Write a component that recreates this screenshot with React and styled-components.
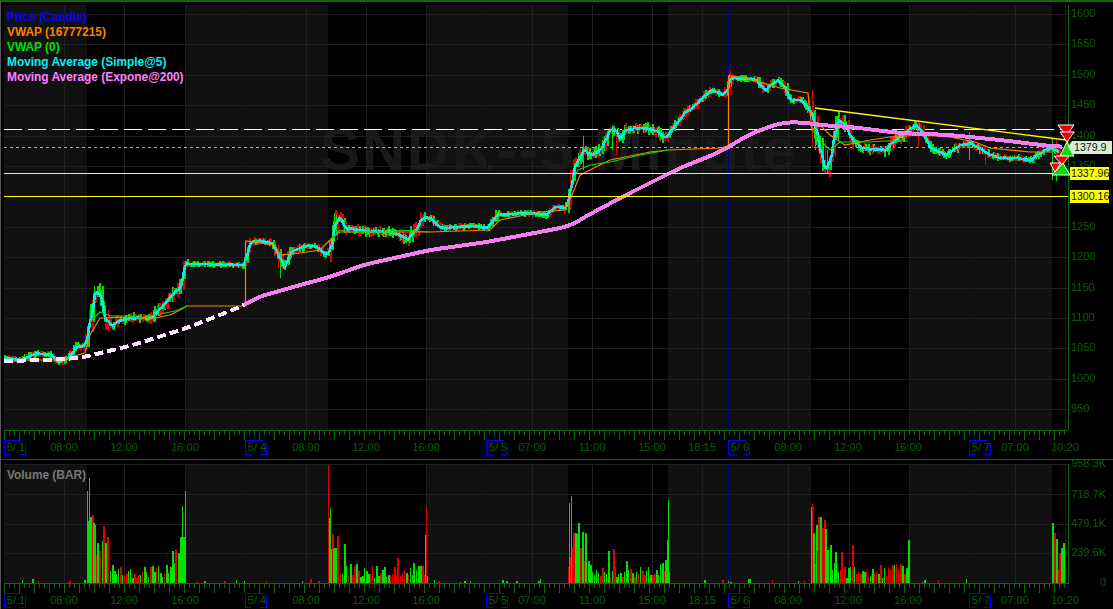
import React from 'react';
import styled, { createGlobalStyle } from 'styled-components';

// chart data is generated from traced keypoints, seeded so every load is the same
const seeded = seed => () => {
  seed = (seed + 0x6d2b79f5) | 0;
  let t = Math.imul(seed ^ (seed >>> 15), 1 | seed);
  t = (t + Math.imul(t ^ (t >>> 7), 61 | t)) ^ t;
  return ((t ^ (t >>> 14)) >>> 0) / 4294967296;
};

const PRICE_PATH = [
  [4, 358], [20, 360], [37, 353], [50, 355], [58, 362], [68, 358], [75, 348], [85, 345], [90, 320], [95, 292],
  [100, 295], [105, 320], [112, 326], [120, 320], [135, 318], [150, 319], [165, 303], [172, 295], [180, 287], [185, 264],
  [243, 265], [245, 260], [250, 243], [258, 241], [272, 243], [275, 250], [281, 260], [284, 268], [290, 252], [305, 246],
  [315, 246], [325, 255], [330, 250], [335, 222], [340, 219], [345, 228], [360, 230], [375, 232], [390, 232], [400, 235],
  [407, 240], [415, 230], [422, 218], [430, 218], [440, 228], [475, 226], [487, 228], [497, 215], [510, 214], [530, 213],
  [545, 215], [555, 207], [565, 208], [568, 200], [572, 178], [575, 165], [583, 150], [590, 155], [600, 150], [610, 130],
  [615, 130], [620, 140], [625, 130], [640, 128], [655, 130], [665, 138], [675, 125], [685, 112], [695, 105], [705, 95],
  [712, 90], [722, 95], [727, 90], [730, 78], [740, 78], [755, 80], [765, 90], [777, 80], [785, 88], [790, 100],
  [800, 100], [808, 108], [812, 115], [820, 150], [825, 170], [830, 160], [833, 140], [838, 120], [845, 125], [852, 140],
  [862, 148], [875, 150], [885, 150], [895, 140], [905, 133], [915, 125], [922, 132], [930, 148], [945, 155], [960, 145],
  [970, 143], [978, 148], [990, 155], [1000, 158], [1015, 158], [1030, 160], [1045, 150], [1052, 148], [1058, 153],
];

const EMA_KEYS = [
  [4, 361], [43, 360], [80, 358], [133, 345], [187, 328], [245, 305], [255, 298], [300, 285], [330, 277], [363, 265],
  [430, 250], [487, 242], [550, 230], [570, 226], [590, 214], [630, 193], [680, 168], [720, 152], [750, 134], [780, 123],
  [800, 122], [820, 125], [850, 127], [900, 133], [950, 135], [1000, 140], [1050, 146], [1062, 147],
];

const VWAP_ORANGE = [
  [4, 360], [60, 360], [85, 353], [90, 335], [100, 318], [130, 317], [150, 319], [170, 315], [180, 310], [187, 306], [245.5, 306],
  [245.5, 241], [275, 245], [280, 255], [300, 253], [320, 250], [330, 240], [340, 232], [430, 232], [490, 230], [500, 220],
  [540, 212], [565, 210], [572, 195], [580, 175], [600, 165], [610, 160], [650, 152], [668, 150], [720, 148], [728.5, 146],
  [728.5, 76], [745, 78], [760, 82], [780, 88], [808, 93], [812, 130], [820, 125], [830, 135], [845, 145], [870, 140],
  [890, 137], [920, 135], [950, 137], [975, 142], [990, 148], [1030, 152], [1052, 152],
];
const VWAP_GREEN = [
  [[90, 322], [100, 312], [110, 316], [130, 316], [140, 318], [175, 311], [187, 306]],
  [[330, 240], [340, 230], [350, 232], [395, 232], [400, 230], [430, 232]],
  [[572, 180], [578, 170], [590, 165], [610, 162], [640, 155], [668, 150]],
  [[812, 130], [820, 140], [830, 150], [840, 142], [870, 142], [885, 141], [908, 141]],
];

const SESSIONS = [[87, 185], [328, 426], [568, 668], [811, 909], [1052, 1065]];
const GRAY_BANDS = [[4, 87], [185, 328], [426, 568], [668, 811], [909, 1052]];
const GRID_X = [64, 124, 185, 306, 366, 426, 532, 592, 652, 702, 788, 849, 909, 1015, 1065];
const DATE_X = [245, 487, 728, 969];
const TIME_LABELS = [
  [64, '08:00'], [124, '12:00'], [185, '16:00'], [306, '08:00'], [366, '12:00'], [426, '16:00'], [532, '07:00'],
  [592, '11:00'], [652, '15:00'], [702, '18:15'], [788, '08:00'], [848, '12:00'], [908, '16:00'], [1015, '07:00'], [1065, '10:20'],
];
const DATE_LABELS = [[4, '5/ 1'], [245, '5/ 4'], [486, '5/ 5'], [728, '5/ 6'], [969, '5/ 7']];
const PRICE_LABELS = [1600, 1550, 1500, 1450, 1400, 1350, 1250, 1200, 1150, 1100, 1050, 1000, 950];
const VOLUME_LABELS = [[467, '958.3K'], [498, '718.7K'], [527, '479.1K'], [556, '239.6K'], [586, '0']];

const UP = '#00e000';
const DOWN = '#e00000';

const interp = (path, x) => {
  for (let i = 1; i < path.length; i++) {
    if (x <= path[i][0]) {
      const [x0, y0] = path[i - 1];
      const [x1, y1] = path[i];
      return x1 === x0 ? y1 : y0 + ((y1 - y0) * (x - x0)) / (x1 - x0);
    }
  }
  return path[path.length - 1][1];
};

const inSession = x => SESSIONS.some(([a, b]) => x >= a && x <= b);
const points = path => path.map(p => p.join(',')).join(' ');

const buildCandles = () => {
  const rnd = seeded(11);
  const bars = [];
  for (let x = 4; x < 1060; x += 1.25) {
    const active = inSession(x);
    const mid = interp(PRICE_PATH, x) + (rnd() - 0.5) * (active ? 2.5 : 1.2);
    const slope = Math.abs(interp(PRICE_PATH, x + 3) - interp(PRICE_PATH, x - 3));
    const size = (active ? 3.5 : 1.8) + slope * 0.5;
    const top = mid - 1.5 - rnd() * size;
    const bottom = mid + 1.5 + rnd() * size;
    bars.push({ x: Math.round(x), mid, top, h: bottom - top, up: rnd() > 0.42 });
  }
  return bars;
};

// hand traced wicks that stand out from the noise
const SPIKES = [
  [94, 286, 322, UP], [92, 300, 330, DOWN], [108, 310, 332, DOWN], [280, 250, 278, UP], [278, 245, 268, DOWN],
  [337, 212, 240, DOWN], [336, 215, 235, UP], [570, 170, 210, DOWN], [583, 136, 170, UP], [612, 125, 150, UP],
  [616, 130, 155, DOWN], [730, 70, 95, DOWN], [812, 90, 148, DOWN], [815, 110, 150, UP], [825, 140, 172, DOWN],
  [827, 150, 174, UP], [838, 112, 140, UP], [918, 120, 148, DOWN], [969, 132, 160, UP], [985, 145, 165, DOWN],
  [1052, 138, 180, UP], [1056, 140, 156, DOWN], [1056, 172, 181, UP],
];

const VOLUME_PEAKS = [
  [87, 92, UP], [88, 62, UP], [89, 105, UP], [90, 66, UP], [92, 68, DOWN], [93, 60, UP], [94, 58, UP], [97, 40, UP], [99, 32, DOWN],
  [102, 42, UP], [103, 57, DOWN], [105, 40, UP], [107, 46, DOWN], [172, 32, UP], [175, 33, DOWN], [178, 30, UP], [180, 46, UP],
  [182, 77, UP], [183, 46, UP], [185, 92, UP],
  [328, 118, DOWN], [329, 65, UP], [330, 75, UP], [332, 49, DOWN], [333, 35, UP], [335, 35, UP], [337, 47, DOWN], [344, 39, UP],
  [397, 25, DOWN], [413, 20, UP], [425, 48, UP], [426, 76, DOWN],
  [569, 80, UP], [571, 87, UP], [573, 50, DOWN], [575, 50, UP], [577, 49, UP], [578, 60, UP], [580, 35, DOWN], [582, 51, UP], [585, 50, UP],
  [613, 34, DOWN], [608, 32, UP], [626, 22, UP], [665, 23, UP], [667, 43, UP], [668, 83, UP],
  [811, 76, UP], [812, 79, DOWN], [813, 50, UP], [816, 58, UP], [817, 32, DOWN], [818, 66, DOWN], [820, 66, UP], [822, 55, DOWN],
  [824, 63, DOWN], [825, 54, UP], [827, 33, UP], [830, 38, UP], [835, 31, UP], [841, 31, DOWN], [852, 38, DOWN], [908, 43, UP],
  [1052, 60, UP], [1054, 50, DOWN], [1056, 44, UP], [1059, 30, DOWN], [1061, 35, UP], [1063, 40, UP],
];

const buildVolume = () => {
  const rnd = seeded(29);
  const bars = [];
  for (let x = 4; x < 1065; x += 2) {
    const session = SESSIONS.find(([a, b]) => x >= a && x <= b);
    let h = 0;
    if (session) {
      const t = (x - session[0]) / (session[1] - session[0]);
      const envelope = 13 + 24 * Math.exp(-t * 8) + 10 * Math.max(0, t - 0.6);
      h = envelope * (0.35 + rnd() * 0.9);
    } else if (rnd() < 0.13) {
      h = 1 + rnd() * 3;
    }
    if (h > 0.5) bars.push({ x, h, w: rnd() > 0.55 ? 2 : 1, up: rnd() > 0.45 });
  }
  return bars;
};

// resample the traced average and smooth it, the real line has no corners
const buildEma = () => {
  const raw = [];
  for (let x = 4; x <= 1062; x += 2) raw.push([x, interp(EMA_KEYS, x)]);
  return raw.map(([x], i) => {
    const slice = raw.slice(Math.max(0, i - 5), i + 6);
    return [x, +(slice.reduce((sum, p) => sum + p[1], 0) / slice.length).toFixed(1)];
  });
};

const CANDLES = buildCandles();
const VOLUMES = buildVolume();
const SMA = CANDLES.map((c, i) => {
  const slice = CANDLES.slice(Math.max(0, i - 1), i + 1);
  const avg = slice.reduce((sum, b) => sum + b.mid, 0) / slice.length;
  return [c.x, +avg.toFixed(1)];
});
const EMA = buildEma();
const EMA_WHITE = EMA.filter(([x]) => x <= 246);
const EMA_PINK = EMA.filter(([x]) => x >= 244);
const PRICE_GRID_Y = Array.from({ length: 14 }, (_, i) => 14 + i * 30.4);
const priceY = price => 14 + ((1600 - price) / 50) * 30.4;

const TICKS = Array.from({ length: 213 }, (_, i) => 4 + i * 5);

const GlobalStyle = createGlobalStyle`
  html, body {
    margin: 0;
    background: #000;
  }
`;

const Window = styled.div`
  display: flex;
  flex-direction: column;
  width: 1113px;
  height: 609px;
  box-sizing: border-box;
  background: #000;
  border-top: 2px solid #0a6a0a;
  border-left: 1px solid #555;
  overflow: hidden;
`;

const PricePane = styled.section`
  position: relative;
  height: 457px;
  flex: none;
`;

const VolumePane = styled.section`
  position: relative;
  flex: 1;
  border-top: 1px solid #0a6a0a;
`;

const Chart = styled.svg`
  display: block;
`;

const Legend = styled.ul`
  position: absolute;
  top: 8px;
  left: 6px;
  margin: 0;
  padding: 0;
  list-style: none;
  font: bold 11.9px/15px 'Liberation Sans', Arial, sans-serif;
`;

const LegendItem = styled.li`
  color: ${p => p.$color};
`;

const PaneTitle = styled.div`
  position: absolute;
  top: 8px;
  left: 6px;
  color: #777;
  font: bold 11.9px/15px 'Liberation Sans', Arial, sans-serif;
`;

const Watermark = styled.text`
  font: bold 60px 'Liberation Sans', Arial, sans-serif;
  letter-spacing: 1.7px;
  fill: #191919;
`;

const AxisLabel = styled.text`
  font: 11px 'Liberation Sans', Arial, sans-serif;
  fill: #0a5e0a;
  text-anchor: ${p => p.$anchor || 'middle'};
`;

const TagLabel = styled.text`
  font: 10.6px 'Liberation Sans', Arial, sans-serif;
  fill: #111;
`;

const Bands = ({ top, bottom }) =>
  GRAY_BANDS.map(([a, b]) => <rect key={a} x={a} y={top} width={b - a} height={bottom - top} fill="#111" />);

const VerticalGrid = ({ top, bottom }) => (
  <g shapeRendering="crispEdges">
    {GRID_X.map(x => <line key={x} x1={x + 0.5} x2={x + 0.5} y1={top} y2={bottom} stroke="#1f1f1f" />)}
    {DATE_X.map(x => <line key={x} x1={x + 0.5} x2={x + 0.5} y1={top} y2={bottom} stroke="#00008c" />)}
  </g>
);

const TimeAxis = ({ y }) => (
  <g>
    <g stroke="#0a6a0a" shapeRendering="crispEdges">
      <line x1={4} x2={1068} y1={y + 0.5} y2={y + 0.5} />
      {TICKS.map((x, i) => (
        <line key={x} x1={x + 0.5} x2={x + 0.5} y1={y} y2={y + (i % 3 === 0 ? 10 : 5)} />
      ))}
    </g>
    {TIME_LABELS.map(([x, label]) => <AxisLabel key={x} x={x} y={y + 21}>{label}</AxisLabel>)}
    {DATE_LABELS.map(([x, label]) => (
      <g key={x}>
        <path
          d={`M${x + 7} ${y + 24.5}H${x + 0.5}V${y + 10.5}H${x + 17.5}M${x + 15} ${y + 24.5}H${x + 21.5}V${y + 13}`}
          fill="none"
          stroke="#0000ff"
          shapeRendering="crispEdges"
        />
        <AxisLabel x={x + 12} y={y + 21}>{label}</AxisLabel>
      </g>
    ))}
  </g>
);

const Triangle = ({ d, fill }) => <path d={d} fill={fill} stroke="#fff" strokeWidth="1" />;

const SignalMarkers = () => (
  <g>
    <Triangle d="M1058 125H1074L1066 136Z" fill="#f00000" />
    <Triangle d="M1060 132H1074L1067 142Z" fill="#f00000" />
    <Triangle d="M1067 142L1074 156H1060Z" fill="#00e000" />
    <Triangle d="M1054 156H1069L1062 165Z" fill="#f00000" />
    <Triangle d="M1063 163L1070 175H1052Z" fill="#00e000" />
    <Triangle d="M1050 163H1061L1055 172Z" fill="#f00000" />
  </g>
);

const PriceTags = () => (
  <g>
    <path d="M1068 147L1072 141H1112V154H1072Z" fill="#d4f0d4" />
    <TagLabel x={1074} y={151}>1379.9</TagLabel>
    <rect x={1070} y={167} width={39} height={13} fill="#ffff00" />
    <TagLabel x={1071} y={177}>1337.96</TagLabel>
    <rect x={1070} y={190} width={39} height={13} fill="#ffff00" />
    <TagLabel x={1071} y={200}>1300.16</TagLabel>
  </g>
);

const PriceChart = () => (
  <Chart width="1112" height="457" viewBox="1 2 1112 457">
    <Bands top={5} bottom={430} />
    <Watermark x={320} y={170}>SNDK--5 Minute</Watermark>
    <g shapeRendering="crispEdges">
      {PRICE_GRID_Y.map(y => <line key={y} x1={4} x2={1068} y1={Math.round(y) + 0.5} y2={Math.round(y) + 0.5} stroke="#1f1f1f" />)}
    </g>
    <VerticalGrid top={5} bottom={430} />

    <g shapeRendering="crispEdges">
      <line x1={4} x2={1068} y1={129.5} y2={129.5} stroke="#fff" strokeDasharray="18 6" />
      <line x1={4} x2={1068} y1={147.5} y2={147.5} stroke="#f09090" strokeDasharray="3 3" />
      {CANDLES.map((c, i) => <rect key={i} x={c.x} y={c.top} width={1.5} height={c.h} fill={c.up ? UP : DOWN} />)}
      {SPIKES.map(([x, a, b, color]) => <rect key={x + color + a} x={x} y={a} width={1} height={b - a} fill={color} />)}
      <polyline points={points(SMA)} fill="none" stroke="#00eeee" strokeWidth="2.6" />
    </g>

    <polyline points={points(VWAP_ORANGE)} fill="none" stroke="#ff8000" strokeWidth="1.2" />
    {VWAP_GREEN.map((path, i) => <polyline key={i} points={points(path)} fill="none" stroke="#00e000" strokeWidth="1.1" />)}

    <g shapeRendering="crispEdges" fill="none" strokeWidth="4">
      <polyline points={points(EMA_WHITE)} stroke="#ffe8ff" strokeDasharray="9 4" />
      <polyline points={points(EMA_PINK)} stroke="#f47ff0" />
    </g>

    <line x1={815} y1={108} x2={1066} y2={140} stroke="#ffff00" strokeWidth="1.3" />
    <g stroke="#ffff00" shapeRendering="crispEdges">
      <line x1={4} x2={1068} y1={173.5} y2={173.5} />
      <line x1={4} x2={1068} y1={196.5} y2={196.5} />
    </g>

    <line x1={1068.5} x2={1068.5} y1={5} y2={430} stroke="#0a6a0a" shapeRendering="crispEdges" />
    {PRICE_LABELS.map(price => (
      <AxisLabel key={price} $anchor="start" x={1071} y={priceY(price) + 3}>{price}</AxisLabel>
    ))}
    <TimeAxis y={430} />
    <SignalMarkers />
    <PriceTags />
  </Chart>
);

const VolumeChart = () => (
  <Chart width="1112" height="149" viewBox="1 460 1112 149">
    <Bands top={464} bottom={583} />
    <g shapeRendering="crispEdges">
      {[464, 494, 524, 553].map(y => <line key={y} x1={4} x2={1068} y1={y + 0.5} y2={y + 0.5} stroke="#1f1f1f" />)}
    </g>
    <VerticalGrid top={464} bottom={583} />
    <g shapeRendering="crispEdges">
      {VOLUMES.map((v, i) => <rect key={i} x={v.x} y={583 - v.h} width={v.w} height={v.h} fill={v.up ? UP : DOWN} />)}
      {VOLUME_PEAKS.map(([x, h, color]) => (
        <rect key={x} x={x} y={583 - h} width={h > 70 ? 1 : 2} height={h} fill={color} />
      ))}
      <line x1={1068.5} x2={1068.5} y1={464} y2={584} stroke="#0a6a0a" />
    </g>
    {VOLUME_LABELS.map(([y, label]) => <AxisLabel key={label} $anchor="end" x={1106} y={y}>{label}</AxisLabel>)}
    <TimeAxis y={583} />
  </Chart>
);

const LEGEND = [
  ['Price (Candle)', '#0000ff'],
  ['VWAP (16777215)', '#ff8000'],
  ['VWAP (0)', '#00e000'],
  ['Moving Average (Simple@5)', '#00f0f0'],
  ['Moving Average (Expone@200)', '#ff80ff'],
];

export default function App() {
  return (
    <Window>
      <GlobalStyle />
      <PricePane>
        <PriceChart />
        <Legend>
          {LEGEND.map(([label, color]) => <LegendItem key={label} $color={color}>{label}</LegendItem>)}
        </Legend>
      </PricePane>
      <VolumePane>
        <VolumeChart />
        <PaneTitle>Volume (BAR)</PaneTitle>
      </VolumePane>
    </Window>
  );
}
